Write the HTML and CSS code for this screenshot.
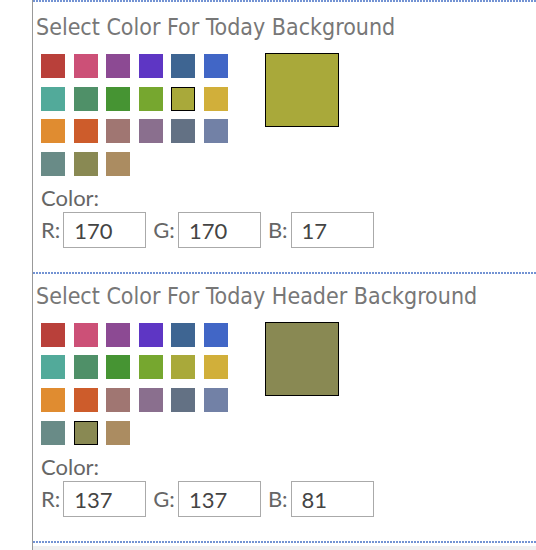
FILE: index.html
```html
<!DOCTYPE html>
<html lang="en">
<head>
  <meta charset="UTF-8" />
  <title>Today Colors</title>
  <link rel="stylesheet" href="styles.css">
</head>
<body>

  <div class="panel">

    <div class="section" id="today-bg">
      <div class="title">Select Color For Today Background</div>
      <div class="picker">
        <div class="swatches"></div>
        <div class="preview"></div>
      </div>
      <div class="color-label">Color:</div>
      <div class="rgb">
        <label>R:</label><input type="text" class="r">
        <label>G:</label><input type="text" class="g">
        <label>B:</label><input type="text" class="b">
      </div>
    </div>

    <div class="section" id="today-header-bg">
      <div class="title">Select Color For Today Header Background</div>
      <div class="picker">
        <div class="swatches"></div>
        <div class="preview"></div>
      </div>
      <div class="color-label">Color:</div>
      <div class="rgb">
        <label>R:</label><input type="text" class="r">
        <label>G:</label><input type="text" class="g">
        <label>B:</label><input type="text" class="b">
      </div>
    </div>

    <div class="section last"></div>
    <div class="footer"></div>

  </div>

  <script>
    // value = what goes in the R/G/B boxes, css = how the swatch is shown
    const palette = [
      { value: [185, 64, 58], css: '#b9403a' },
      { value: [204, 80, 119], css: '#cc5077' },
      { value: [140, 74, 147], css: '#8c4a93' },
      { value: [94, 54, 196], css: '#5e36c4' },
      { value: [62, 101, 146], css: '#3e6592' },
      { value: [65, 102, 198], css: '#4166c6' },
      { value: [82, 170, 154], css: '#52aa9a' },
      { value: [79, 144, 104], css: '#4f9068' },
      { value: [70, 148, 51], css: '#469433' },
      { value: [118, 167, 47], css: '#76a72f' },
      { value: [170, 170, 17], css: '#a9a93a' },
      { value: [209, 175, 58], css: '#d1af3a' },
      { value: [224, 140, 48], css: '#e08c30' },
      { value: [205, 92, 43], css: '#cd5c2b' },
      { value: [160, 118, 114], css: '#a07672' },
      { value: [138, 111, 142], css: '#8a6f8e' },
      { value: [99, 113, 132], css: '#637184' },
      { value: [114, 129, 166], css: '#7281a6' },
      { value: [105, 139, 135], css: '#698b87' },
      { value: [137, 137, 81], css: '#898953' },
      { value: [171, 140, 97], css: '#ab8c61' }
    ];

    function setupPicker(id, selected) {
      const section = document.getElementById(id);
      const swatches = section.querySelector('.swatches');

      palette.forEach((color, i) => {
        const sw = document.createElement('div');
        sw.className = 'swatch';
        sw.style.background = color.css;
        sw.onclick = () => selectColor(section, i);
        swatches.appendChild(sw);
      });

      selectColor(section, selected);
    }

    function selectColor(section, index) {
      const color = palette[index];
      section.querySelectorAll('.swatch').forEach((sw, i) => {
        sw.classList.toggle('selected', i === index);
      });
      section.querySelector('.preview').style.background = color.css;
      section.querySelector('.r').value = color.value[0];
      section.querySelector('.g').value = color.value[1];
      section.querySelector('.b').value = color.value[2];
    }

    setupPicker('today-bg', 10);
    setupPicker('today-header-bg', 19);
  </script>

</body>
</html>
```

FILE: styles.css
```css
body {
  margin: 0;
  background: #fff;
}

.panel {
  margin-left: 32px;
  border-left: 1px solid #999;
  min-height: 100vh;
}

.section {
  padding: 2px 0 24px 3px;
  background: repeating-linear-gradient(to right, #7393d3 0 2px, transparent 2px 3px) top left / 100% 2px no-repeat;
}

.section.last {
  padding: 2px 0 0;
}

.footer {
  margin-top: 3px;
  height: 10px;
  background: #f0f0f0;
}

.title {
  margin-top: 9px;
  font-family: "DejaVu Sans Condensed", "DejaVu Sans", sans-serif;
  font-stretch: condensed;
  font-size: 23px;
  line-height: 26px;
  color: #777;
  white-space: nowrap;
}

.section:first-child .title {
  margin-top: 12px;
}

.picker {
  display: flex;
  align-items: flex-start;
  margin: 14px 0 0 5px;
}

.swatches {
  display: grid;
  grid-template-columns: repeat(6, 24px);
  grid-auto-rows: 24px;
  gap: 8.6px;
}

.swatch {
  box-sizing: border-box;
  cursor: pointer;
}

.swatch.selected {
  border: 1px solid #000;
}

.preview {
  box-sizing: border-box;
  width: 74px;
  height: 74px;
  margin: -1px 0 0 37px;
  border: 1px solid #000;
}

.color-label {
  margin: 9px 0 0 5px;
  font-family: Lato, sans-serif;
  font-size: 22px;
  line-height: 26px;
  color: #666;
}

.rgb {
  display: flex;
  align-items: center;
  margin: 1px 0 0 5px;
  font-family: Lato, sans-serif;
  font-size: 22px;
  color: #666;
}

.rgb label {
  margin-right: 3px;
}

.rgb input {
  box-sizing: border-box;
  width: 83px;
  height: 36px;
  margin: 0 7px 0 0;
  padding: 2px 0 0 10px;
  border: 1px solid #aaa;
  border-radius: 0;
  font-family: Lato, sans-serif;
  font-size: 22px;
  color: #444;
  outline: none;
}
```
